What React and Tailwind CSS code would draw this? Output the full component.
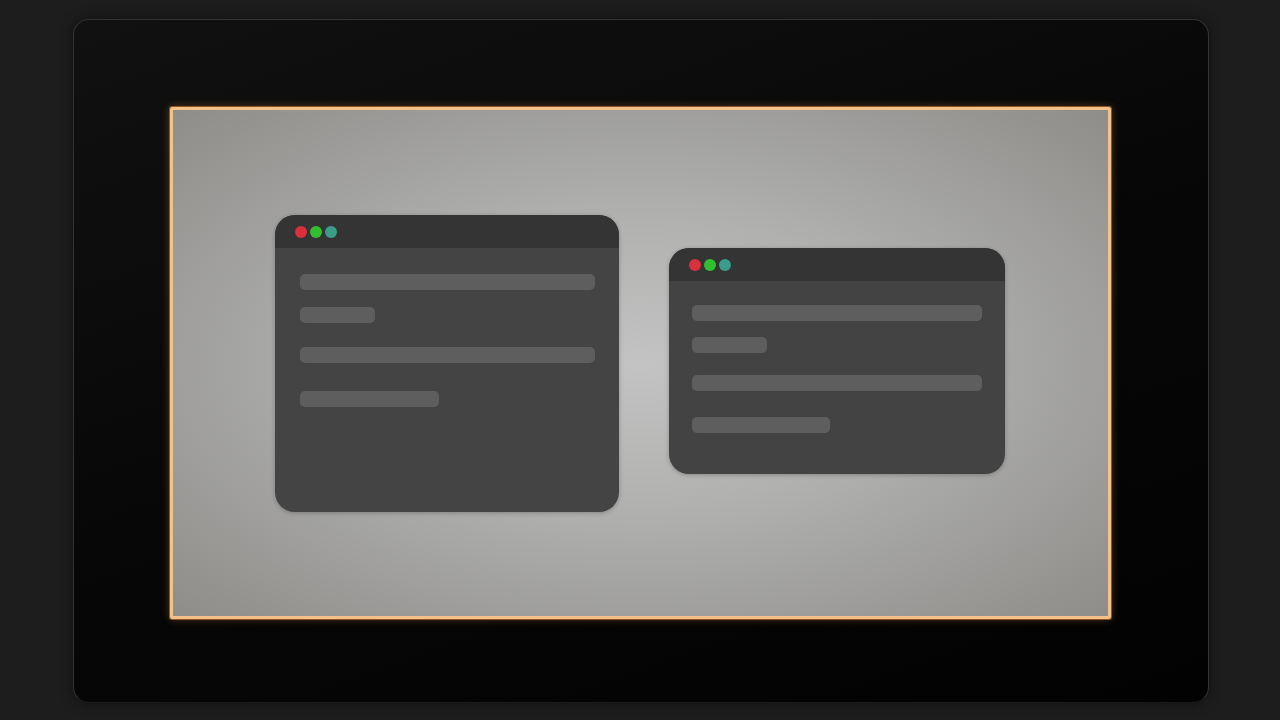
export default function App() {
  const Dots = () => (
    <div className="flex items-center gap-[3px]">
      <div className="w-[12px] h-[12px] rounded-full bg-[#d8303c]" />
      <div className="w-[12px] h-[12px] rounded-full bg-[#2fbf2f]" />
      <div className="w-[12px] h-[12px] rounded-full bg-[#3a9d8c]" />
    </div>
  );
  return (
    <div className="w-[1280px] h-[720px] bg-[#1d1d1d] overflow-hidden pt-[19px] pl-[73px]">
      <div className="w-[1136px] h-[684px] rounded-[16px] border border-[#333333] border-b-[#1a1a1a] bg-[linear-gradient(160deg,#111111_0%,#070707_50%,#020202_100%)] pt-[87px] pl-[96px] shadow-[0_0_12px_rgba(0,0,0,0.5)]">
        <div className="w-[941px] h-[512px] rounded-[2px] border-[3px] border-[#f4c189] shadow-[0_0_0_1px_#8a5426,0_0_8px_rgba(240,160,80,0.35)] bg-[radial-gradient(ellipse_at_50%_50%,#c3c3c3_0%,#b1b1b0_40%,#8e8d8a_100%)] flex items-start pl-[102px] pt-[105px]">
          <div className="w-[344px] h-[297px] rounded-[20px] bg-[#444444] overflow-hidden flex flex-col shadow-[0_1px_4px_rgba(0,0,0,0.25)]">
            <div className="h-[33px] bg-[#343434] flex items-center pl-[20px]">
              <Dots />
            </div>
            <div className="flex flex-col px-[25px]">
              <div className="mt-[26px] h-[16px] w-[295px] rounded-[5px] bg-[#5e5e5e]" />
              <div className="mt-[17px] h-[16px] w-[75px] rounded-[5px] bg-[#5e5e5e]" />
              <div className="mt-[24px] h-[16px] w-[295px] rounded-[5px] bg-[#5e5e5e]" />
              <div className="mt-[28px] h-[16px] w-[139px] rounded-[5px] bg-[#5e5e5e]" />
            </div>
          </div>
          <div className="ml-[50px] mt-[33px] w-[336px] h-[226px] rounded-[20px] bg-[#434343] overflow-hidden flex flex-col shadow-[0_1px_4px_rgba(0,0,0,0.25)]">
            <div className="h-[33px] bg-[#343434] flex items-center pl-[20px]">
              <Dots />
            </div>
            <div className="flex flex-col px-[23px]">
              <div className="mt-[24px] h-[16px] w-[290px] rounded-[5px] bg-[#5e5e5e]" />
              <div className="mt-[16px] h-[16px] w-[75px] rounded-[5px] bg-[#5e5e5e]" />
              <div className="mt-[22px] h-[16px] w-[290px] rounded-[5px] bg-[#5e5e5e]" />
              <div className="mt-[26px] h-[16px] w-[138px] rounded-[5px] bg-[#5e5e5e]" />
            </div>
          </div>
        </div>
      </div>
    </div>
  );
}
